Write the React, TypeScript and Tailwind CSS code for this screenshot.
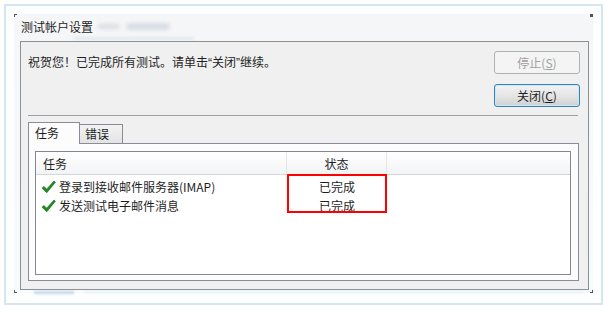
import React from 'react';

const font = { fontFamily: '"Noto Sans CJK SC", "Microsoft YaHei", sans-serif' };
const latin = { fontFamily: '"Liberation Sans", sans-serif' };

function Check() {
  return (
    <svg width="15" height="14" viewBox="0 0 15 14" className="shrink-0">
      <path d="M1 8.2 L3 6.4 L5.6 9.2 L13 1 L14.4 2.2 L5.8 12.8 Z" fill="#1f8a1f" stroke="#0f6a12" strokeWidth="0.6" strokeLinejoin="round" />
    </svg>
  );
}

function Corner({ className }: { className: string }) {
  return <div className={`absolute w-[3px] h-[3px] ${className}`} />;
}

const tasks = ['登录到接收邮件服务器(IMAP)', '发送测试电子邮件消息'];

export default function App() {
  return (
    <div className="w-[607px] h-[312px] bg-white p-[4px] text-[12px] text-[#1e1e1e]" style={font}>
      <div className="h-[301px] border-2 border-[#d6e5f0] bg-[#fdfefe] pt-[8px] px-[8px]">
        <div className="relative h-[279px] bg-gradient-to-b from-[#f5f6f7] to-[#f8fbfb] pl-[6px] pr-[4px] pt-[5px]">
          <Corner className="left-0 top-0 border-l border-t border-[#555]" />
          <Corner className="right-0 top-0 bg-[#555] w-[2px] h-[2px]" />
          <Corner className="left-0 bottom-0 border-l border-b border-[#555]" />
          <Corner className="right-0 bottom-0 border-r border-b border-[#555]" />
          {/* blurred window behind */}
          <div className="absolute left-[84px] top-[10px] w-[22px] h-[5px] rounded-full bg-[#c3ccd6] blur-[2px] opacity-60" />
          <div className="absolute left-[112px] top-[9px] w-[44px] h-[7px] rounded-full bg-[#c3ccd6] blur-[2px] opacity-60" />
          <div className="absolute left-[60px] top-[23px] w-[120px] h-[3px] bg-[#d5dde5] blur-[1.5px] opacity-60" />
          <div className="absolute left-[20px] bottom-[-1px] w-[40px] h-[3px] bg-[#c6d6ea] blur-[1px]" />
          <div className="absolute left-[70px] bottom-[0px] w-[500px] h-[2px] bg-[#e3f3f6] blur-[1px]" />

          <div className="relative h-[16px] leading-[16px] pl-[1px]">测试帐户设置</div>

          <div className="relative mt-[6px] h-[249px] border border-[#8c8f94] bg-[#f0f0f0] flex flex-col">
            <div className="flex items-center justify-between pt-[9px] pl-[7px] pr-[8px]">
              <span className="leading-[16px]">
                祝贺您！已完成所有测试。请单击<span style={latin}>“</span>关闭<span style={latin}>”</span>继续。
              </span>
              <button className="w-[86px] h-[23px] rounded-[3px] border border-[#adb2b5] bg-[#f4f4f4] text-[#a0a0a0] leading-[20px]">
                停止(<span className="underline">S</span>)
              </button>
            </div>
            <div className="flex justify-end pr-[8px] mt-[10px]">
              <button className="w-[86px] h-[23px] rounded-[3px] border border-[#3c7fb1] shadow-[inset_0_0_0_1px_#c4eafd] bg-gradient-to-b from-[#f2f2f2] via-[#e6e6e6] to-[#d0d0d0] leading-[20px]">
                关闭(<span className="underline">C</span>)
              </button>
            </div>
            <div className="mt-[8px] ml-[7px] mr-[10px] h-px bg-[#a0a0a0]" />

            <div className="mt-[6px] ml-[7px] mr-[9px] flex flex-col">
              <div className="flex items-end h-[21px]">
                <div className="relative z-10 -mb-px w-[52px] h-[22px] border border-b-0 border-[#898c95] bg-[#fcfcfc] pl-[6px] leading-[20px]">
                  任务
                </div>
                <div className="-ml-px w-[44px] h-[19px] border border-b-0 border-[#898c95] bg-gradient-to-b from-[#f3f3f3] to-[#e3e3e3] pl-[5px] leading-[18px]">
                  错误
                </div>
              </div>
              <div className="h-[138px] border border-[#898c95] bg-[#fcfcfc] pt-[7px] pl-[6px] pr-[7px] pb-[5px] flex">
                <div className="relative flex-1 border border-[#828790] bg-white">
                  <div className="flex h-[23px] border-b border-[#d5d5d5] bg-gradient-to-b from-white to-[#f3f4f6]">
                    <div className="w-[251px] pl-[7px] leading-[24px] border-r border-[#e5e5e5]">任务</div>
                    <div className="w-[100px] text-center leading-[24px] border-r border-[#e5e5e5]">状态</div>
                    <div className="flex-1" />
                  </div>
                  <div className="pt-[2px]">
                    {tasks.map(t => (
                      <div key={t} className="flex h-[19px] items-center">
                        <div className="w-[251px] flex items-center gap-[3px] pl-[5px]">
                          <Check />
                          <span className="leading-[16px]">{t}</span>
                        </div>
                        <div className="w-[100px] text-center leading-[16px]">已完成</div>
                      </div>
                    ))}
                  </div>
                  <div className="absolute left-[251px] top-[22px] w-[100px] h-[39px] border-2 border-[#ff0000]" />
                </div>
              </div>
            </div>
          </div>
        </div>
      </div>
    </div>
  );
}
